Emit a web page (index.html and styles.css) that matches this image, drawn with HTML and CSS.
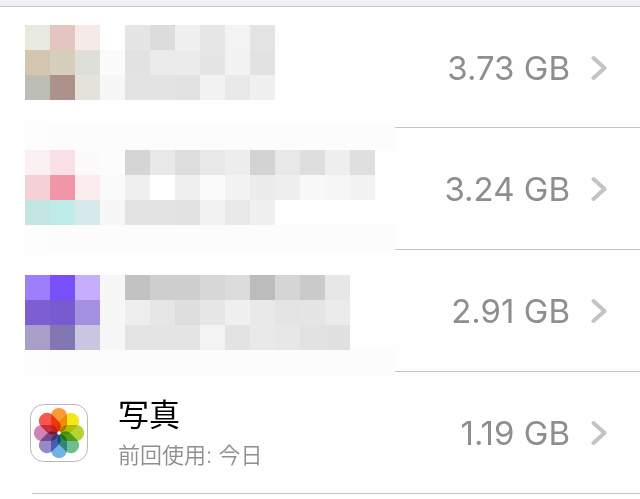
FILE: index.html
```html
<!DOCTYPE html>
<html lang="ja">
<head>
<meta charset="utf-8">
<meta name="viewport" content="width=device-width">
<title>ストレージ</title>
<link rel="stylesheet" href="styles.css">
</head>
<body>
<main class="storage">
  <a class="row" href="#">
    <span class="size">3.73 GB</span>
    <svg class="chevron" viewBox="0 0 16 26" aria-hidden="true"><path d="M2.5 3 13.5 13 2.5 23"/></svg>
  </a>
  <a class="row" href="#">
    <span class="size">3.24 GB</span>
    <svg class="chevron" viewBox="0 0 16 26" aria-hidden="true"><path d="M2.5 3 13.5 13 2.5 23"/></svg>
  </a>
  <a class="row" href="#">
    <span class="size">2.91 GB</span>
    <svg class="chevron" viewBox="0 0 16 26" aria-hidden="true"><path d="M2.5 3 13.5 13 2.5 23"/></svg>
  </a>
  <a class="row" href="#">
    <svg class="app-icon" viewBox="0 0 58 58" aria-hidden="true">
      <rect x=".5" y=".5" width="57" height="57" rx="13" fill="#fff" stroke="#b8b8b8"/>
      <g class="petals" transform="translate(29 29)">
        <rect x="-8" y="-25" width="16" height="24" rx="7.6" fill="#f99c36"/>
        <rect x="-8" y="-25" width="16" height="24" rx="7.6" fill="#f5e51b" transform="rotate(45)"/>
        <rect x="-8" y="-25" width="16" height="24" rx="7.6" fill="#b5d334" transform="rotate(90)"/>
        <rect x="-8" y="-25" width="16" height="24" rx="7.6" fill="#6cc08b" transform="rotate(135)"/>
        <rect x="-8" y="-25" width="16" height="24" rx="7.6" fill="#70b2e4" transform="rotate(180)"/>
        <rect x="-8" y="-25" width="16" height="24" rx="7.6" fill="#9788c8" transform="rotate(225)"/>
        <rect x="-8" y="-25" width="16" height="24" rx="7.6" fill="#d184b3" transform="rotate(270)"/>
        <rect x="-8" y="-25" width="16" height="24" rx="7.6" fill="#f6564e" transform="rotate(315)"/>
      </g>
      <circle cx="29" cy="29" r="1.7" fill="#fff"/>
    </svg>
    <span class="label">
      <span class="name">写真</span>
      <span class="used">前回使用: 今日</span>
    </span>
    <span class="size">1.19 GB</span>
    <svg class="chevron" viewBox="0 0 16 26" aria-hidden="true"><path d="M2.5 3 13.5 13 2.5 23"/></svg>
  </a>

  <!-- Pixelated mask over the private rows, one unit per block -->
  <svg class="mosaic" viewBox="0 0 370 350" shape-rendering="crispEdges" aria-hidden="true">
    <g transform="scale(25)">
      <path fill="#fcfcfc" d="M0 4h14.8v1H0zM0 8h14.8v1H0zM0 13h14.8v1H0z"/>
      <path fill="#fdfdfd" d="M0 4h1v1H0zM0 8h1v1H0zM0 13h1v1H0z"/>

      <path fill="#e9eadf" d="M0 0h1v1H0z"/><path fill="#e4c6c0" d="M1 0h1v1H1z"/><path fill="#f5eae8" d="M2 0h1v1H2z"/>
      <path fill="#e5e5e5" d="M4 0h1v1H4z"/><path fill="#dcdcdc" d="M5 0h1v1H5z"/><path fill="#f0f0f0" d="M6 0h1v1H6z"/><path fill="#e6e6e6" d="M7 0h1v1H7z"/><path fill="#f3f3f3" d="M8 0h1v1H8z"/><path fill="#e4e4e4" d="M9 0h1v1H9z"/>
      <path fill="#d2c6b0" d="M0 1h1v1H0z"/><path fill="#d6cfbc" d="M1 1h1v1H1z"/><path fill="#dedfd6" d="M2 1h1v1H2z"/><path fill="#fbfbfb" d="M3 1h1v1H3z"/>
      <path fill="#e2e2e2" d="M4 1h1v1H4z"/><path fill="#ebebeb" d="M5 1h2v1H5z"/><path fill="#e5e5e5" d="M7 1h1v1H7z"/><path fill="#f2f2f2" d="M8 1h1v1H8z"/><path fill="#e2e2e2" d="M9 1h1v1H9z"/>
      <path fill="#bcbdb4" d="M0 2h1v1H0z"/><path fill="#ac928b" d="M1 2h1v1H1z"/><path fill="#e3e2db" d="M2 2h1v1H2z"/><path fill="#f7f7f7" d="M3 2h1v1H3z"/>
      <path fill="#e3e3e3" d="M4 2h2v1H4z"/><path fill="#e2e2e2" d="M6 2h1v1H6z"/><path fill="#f2f2f2" d="M7 2h1v1H7z"/><path fill="#e9e9e9" d="M8 2h1v1H8z"/><path fill="#f0f0f0" d="M9 2h1v1H9z"/>

      <path fill="#fbf1f3" d="M0 5h1v1H0z"/><path fill="#f8e0e6" d="M1 5h1v1H1z"/><path fill="#fcfafb" d="M2 5h1v1H2z"/><path fill="#fcfcfc" d="M3 5h1v1H3z"/>
      <path fill="#d5d5d5" d="M4 5h1v1H4z"/><path fill="#e8e8e8" d="M5 5h1v1H5z"/><path fill="#dddddd" d="M6 5h1v1H6z"/><path fill="#e8e8e8" d="M7 5h1v1H7z"/><path fill="#ededed" d="M8 5h1v1H8z"/><path fill="#d3d3d3" d="M9 5h1v1H9z"/><path fill="#e8e8e8" d="M10 5h1v1h-1z"/><path fill="#dedede" d="M11 5h1v1h-1z"/><path fill="#eeeeee" d="M12 5h1v1h-1z"/><path fill="#dfdfdf" d="M13 5h1v1h-1z"/>
      <path fill="#f5d0d7" d="M0 6h1v1H0z"/><path fill="#f196a8" d="M1 6h1v1H1z"/><path fill="#faecef" d="M2 6h1v1H2z"/><path fill="#fafafa" d="M3 6h1v1H3z"/>
      <path fill="#efefef" d="M4 6h1v1H4z"/><path fill="#ffffff" d="M5 6h1v1H5z"/><path fill="#f0f0f0" d="M6 6h1v1H6z"/><path fill="#fafafa" d="M7 6h1v1H7z"/><path fill="#f2f2f2" d="M8 6h1v1H8z"/><path fill="#ececec" d="M9 6h1v1H9z"/><path fill="#eeeeee" d="M10 6h1v1h-1z"/><path fill="#f8f8f8" d="M11 6h1v1h-1z"/><path fill="#f6f6f6" d="M12 6h1v1h-1z"/><path fill="#f2f2f2" d="M13 6h1v1h-1z"/>
      <path fill="#c4e6e3" d="M0 7h1v1H0z"/><path fill="#beeae7" d="M1 7h1v1H1z"/><path fill="#d6eaec" d="M2 7h1v1H2z"/><path fill="#f7f7f7" d="M3 7h1v1H3z"/>
      <path fill="#e3e3e3" d="M4 7h2v1H4z"/><path fill="#e2e2e2" d="M6 7h1v1H6z"/><path fill="#f2f2f2" d="M7 7h1v1H7z"/><path fill="#e9e9e9" d="M8 7h1v1H8z"/><path fill="#f0f0f0" d="M9 7h1v1H9z"/>

      <path fill="#9e7ffb" d="M0 10h1v1H0z"/><path fill="#784ff9" d="M1 10h1v1H1z"/><path fill="#c5affd" d="M2 10h1v1H2z"/><path fill="#f7f7f7" d="M3 10h1v3H3z"/>
      <path fill="#c2c2c2" d="M4 10h1v1H4z"/><path fill="#cecece" d="M5 10h1v1H5z"/><path fill="#cfcfcf" d="M6 10h1v1H6z"/><path fill="#d7d7d7" d="M7 10h1v1H7z"/><path fill="#dcdcdc" d="M8 10h1v1H8z"/><path fill="#bcbcbc" d="M9 10h1v1H9z"/><path fill="#d5d5d5" d="M10 10h1v1h-1z"/><path fill="#cacaca" d="M11 10h1v1h-1z"/><path fill="#e7e7e7" d="M12 10h1v1h-1z"/>
      <path fill="#7d5fd1" d="M0 11h1v1H0z"/><path fill="#785ad1" d="M1 11h1v1H1z"/><path fill="#a390e0" d="M2 11h1v1H2z"/>
      <path fill="#eeeeee" d="M4 11h1v1H4z"/><path fill="#e6e6e6" d="M5 11h1v1H5z"/><path fill="#dedede" d="M6 11h1v1H6z"/><path fill="#e6e6e6" d="M7 11h1v1H7z"/><path fill="#f0f0f0" d="M8 11h1v1H8z"/><path fill="#e9e9e9" d="M9 11h1v1H9z"/><path fill="#e4e4e4" d="M10 11h1v1h-1z"/><path fill="#e5e5e5" d="M11 11h1v1h-1z"/><path fill="#ebebeb" d="M12 11h1v1h-1z"/>
      <path fill="#a89fc9" d="M0 12h1v1H0z"/><path fill="#8377b3" d="M1 12h1v1H1z"/><path fill="#cac5e1" d="M2 12h1v1H2z"/>
      <path fill="#e4e4e4" d="M4 12h3v1H4z"/><path fill="#f3f3f3" d="M7 12h1v1H7z"/><path fill="#e3e3e3" d="M8 12h1v1H8z"/><path fill="#e9e9e9" d="M9 12h1v1H9z"/><path fill="#e7e7e7" d="M10 12h1v1h-1z"/><path fill="#e2e2e2" d="M11 12h1v1h-1z"/><path fill="#e1e1e1" d="M12 12h1v1h-1z"/>
    </g>
  </svg>
</main>
</body>
</html>
```
FILE: styles.css
```css
* { box-sizing: border-box; }

body {
  margin: 0;
  background: #fefefe;
  font-family: Inter, "Noto Sans CJK JP", sans-serif;
  border-top: 6px solid #f0eff5;
}

.storage {
  position: relative;
  border-top: 1px solid #c6c6c8;
  margin-bottom: 5px;
}

.row {
  display: flex;
  align-items: center;
  height: 122px;
  margin-left: 30px;
  padding-right: 33px;
  color: #8e8e8e;
  text-decoration: none;
  background: linear-gradient(#c6c6c6, #c6c6c6) 2px 100% / 100% 1px no-repeat;
}

.row:first-child { height: 121px; }

.app-icon {
  flex: none;
  width: 58px;
  height: 58px;
}

.petals { isolation: isolate; }
.petals rect { mix-blend-mode: multiply; }

.label {
  display: flex;
  flex-direction: column;
  margin-left: 30px;
}

.name {
  color: #000;
  font-size: 31px;
  font-weight: 400;
  line-height: 44px;
}

.used {
  font-size: 22px;
  font-weight: 350;
  line-height: 36px;
}

.size {
  margin-left: auto;
  font-size: 33px;
  line-height: 42px;
}

.chevron {
  flex: none;
  width: 16px;
  height: 26px;
  margin-left: 21px;
  fill: none;
  stroke: #c4c4c4;
  stroke-width: 4;
  stroke-linecap: round;
  stroke-linejoin: round;
}

.mosaic {
  position: absolute;
  top: 18px;
  left: 25px;
  width: 370px;
  height: 350px;
  pointer-events: none;
}
```
